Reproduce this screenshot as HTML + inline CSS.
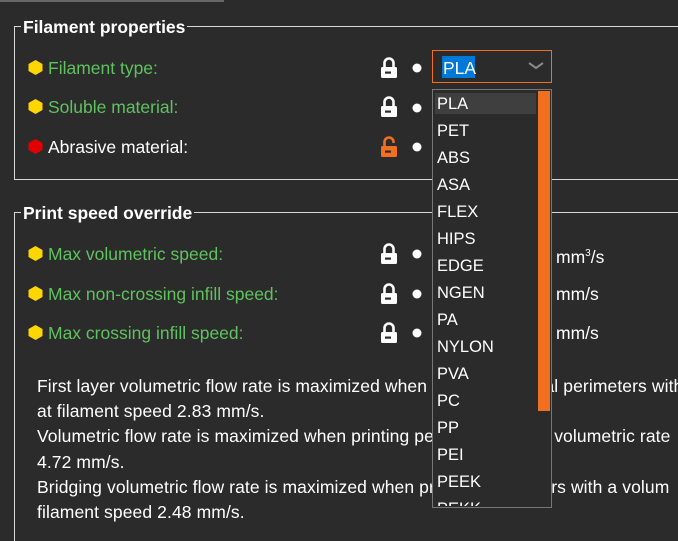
<!DOCTYPE html><html><head><style>
html,body{margin:0;width:678px;height:541px;overflow:hidden}
body{background:#2b2b2b;font-family:"Liberation Sans",sans-serif;color:#fff;position:relative}
#w{position:absolute;left:0;top:0;width:678px;height:541px;overflow:hidden}
.a{position:absolute;white-space:nowrap}
.box{position:absolute;border:1px solid #d8d8d8}
.t{position:absolute;background:#2b2b2b;font-weight:bold;font-size:17.5px;padding:0 2px;line-height:18px}
.lab{font-size:17.5px;line-height:20px}
.g{color:#5ec25e}
.it{position:absolute;left:437px;font-size:16.5px;line-height:20px}
.p{font-size:17.5px;line-height:25.2px;letter-spacing:0.1px}
</style></head><body><div id="w">
<div class="a" style="left:0;top:0;width:224px;height:2px;background:#666"></div>
<div class="box" style="left:14px;top:26px;width:663px;height:152px;border-right:none"></div>
<div class="t" style="left:21px;top:18px">Filament properties</div>
<div class="box" style="left:14px;top:212px;width:663px;height:328px;border-right:none;border-bottom:none"></div>
<div class="t" style="left:21px;top:204px">Print speed override</div>

<svg width="678" height="541" style="position:absolute;left:0;top:0">
<defs>
<g id="h"><polygon points="7.5,0 14.5,4 14.5,11 7.5,15 0.5,11 0.5,4"/></g>
<g id="lk"><path d="M4.5,10 V6 a4.5,4.5 0 0 1 9,0 V10" fill="none" stroke="currentColor" stroke-width="2.6"/><rect x="1" y="10" width="16" height="11" rx="1.5" fill="currentColor"/><rect x="5" y="14.5" width="6" height="2.2" fill="#2b2b2b"/></g>
<g id="ulk"><path d="M4.5,10 V6 a4.5,4.5 0 0 1 9,0 V7" fill="none" stroke="currentColor" stroke-width="2.6"/><rect x="1" y="10" width="16" height="11" rx="1.5" fill="currentColor"/><rect x="5" y="14.5" width="6" height="2.2" fill="#2b2b2b"/></g>
</defs>
<g fill="#ffd700"><use href="#h" x="28" y="60"/><use href="#h" x="28" y="99"/><use href="#h" x="28" y="246"/><use href="#h" x="28" y="286"/><use href="#h" x="28" y="325"/></g>
<use href="#h" x="28" y="139" fill="#e00000"/>
<g color="#fff"><use href="#lk" x="380" y="57"/><use href="#lk" x="380" y="96"/><use href="#lk" x="380" y="243"/><use href="#lk" x="380" y="283"/><use href="#lk" x="380" y="322"/></g>
<use href="#ulk" x="380" y="136" color="#f07020"/>
<g fill="#fff"><circle cx="417" cy="68" r="4.5"/><circle cx="417" cy="108" r="4.5"/><circle cx="417" cy="147" r="4.5"/><circle cx="417" cy="254" r="4.5"/><circle cx="417" cy="294" r="4.5"/><circle cx="417" cy="333" r="4.5"/></g>
</svg>

<div class="a lab g" style="left:48px;top:58px">Filament type:</div>
<div class="a lab g" style="left:48px;top:97px">Soluble material:</div>
<div class="a lab" style="left:48px;top:137px">Abrasive material:</div>
<div class="a lab g" style="left:48px;top:244px">Max volumetric speed:</div>
<div class="a lab g" style="left:48px;top:284px">Max non-crossing infill speed:</div>
<div class="a lab g" style="left:48px;top:323px">Max crossing infill speed:</div>

<div class="a lab" style="left:556px;top:244px">mm<sup style="font-size:10px">3</sup>/s</div>
<div class="a lab" style="left:556px;top:284px">mm/s</div>
<div class="a lab" style="left:556px;top:323px">mm/s</div>

<div class="a p" style="left:37px;top:374px;width:641px;overflow:hidden">First layer volumetric flow rate is maximized when printing external perimeters with<br>at filament speed 2.83 mm/s.<br>Volumetric flow rate is maximized when printing perimeters with a volumetric rate<br>4.72 mm/s.<br>Bridging volumetric flow rate is maximized when printing perimeters with a volum<br>filament speed 2.48 mm/s.</div>

<div class="a" style="left:432px;top:50px;width:118px;height:31px;border:1px solid #f07020;background:#2b2b2b"></div>
<div class="a" style="left:442px;top:56px;width:33px;height:22px;background:#0078d7"></div>
<div class="a lab" style="left:443px;top:58px">PLA</div>
<svg class="a" style="left:527px;top:61px" width="18" height="10"><path d="M2,2 L9,7 L16,2" fill="none" stroke="#888" stroke-width="2"/></svg>

<div class="a" style="left:432px;top:89px;width:118px;height:417px;border:1px solid #777;background:#2b2b2b;overflow:hidden">
<div class="a" style="left:2px;top:3px;width:101px;height:21px;background:#3f3f3f"></div>
<div class="a" style="left:105px;top:1px;width:12px;height:320px;background:#f07020"></div>
</div>
<div class="it" style="top:94px">PLA</div><div class="it" style="top:121px">PET</div><div class="it" style="top:148px">ABS</div><div class="it" style="top:175px">ASA</div><div class="it" style="top:202px">FLEX</div><div class="it" style="top:229px">HIPS</div><div class="it" style="top:256px">EDGE</div><div class="it" style="top:283px">NGEN</div><div class="it" style="top:310px">PA</div><div class="it" style="top:337px">NYLON</div><div class="it" style="top:364px">PVA</div><div class="it" style="top:391px">PC</div><div class="it" style="top:418px">PP</div><div class="it" style="top:445px">PEI</div><div class="it" style="top:472px">PEEK</div>
<div class="a" style="left:437px;top:499px;height:7px;overflow:hidden"><div style="font-size:16.5px;line-height:20px">PEKK</div></div>
</div></body></html>
